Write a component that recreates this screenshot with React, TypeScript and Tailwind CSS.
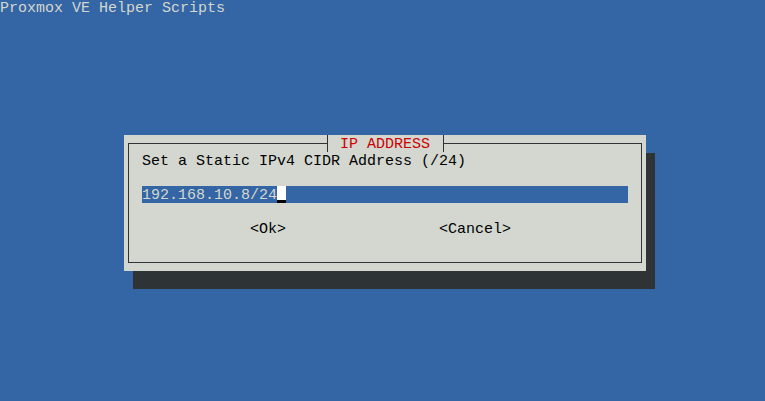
import React from 'react';

const App = () => {
  return (
    <div className="w-[765px] h-[401px] overflow-hidden bg-[#3465a4] font-['Liberation_Mono',monospace] text-[15px] leading-[17px]">
      <div className="h-[17px] text-[#d3d7cf] whitespace-pre">Proxmox VE Helper Scripts</div>

      {/* Dialog */}
      <div className="relative mt-[118px] ml-[124px] w-[522px] h-[136px] bg-[#d3d7cf] shadow-[9px_18px_0_#2e3436] pt-[8px] pb-[8px] px-[4px] flex flex-col">
        <div className="flex-1 border border-[#2e3436] pt-[8px] pl-[13px]">
          <div className="h-[17px] text-black whitespace-pre">
            <span className="relative top-px">Set a Static IPv4 CIDR Address (/24)</span>
          </div>
          <div className="h-[17px]" />
          <div className="h-[17px] w-[486px] bg-[#3465a4] flex text-[#d3d7cf] whitespace-pre">
            <span className="relative top-px">192.168.10.8/24</span>
            <span className="w-[9px] h-[17px] bg-white border-b-[3px] border-black" />
          </div>
          <div className="h-[17px]" />
          <div className="h-[17px] flex pl-[108px] text-black whitespace-pre">
            <span className="relative top-px">&lt;Ok&gt;</span>
            <span className="relative top-px ml-[153px]">&lt;Cancel&gt;</span>
          </div>
        </div>

        {/* Title on the top border */}
        <div className="absolute left-[203px] top-0 w-[117px] h-[17px] bg-[#d3d7cf] border-l border-r border-[#2e3436] pl-[12px] text-[#cc0000] whitespace-pre">
          <span className="relative top-px">IP ADDRESS</span>
        </div>
      </div>
    </div>
  );
};

export default App;
